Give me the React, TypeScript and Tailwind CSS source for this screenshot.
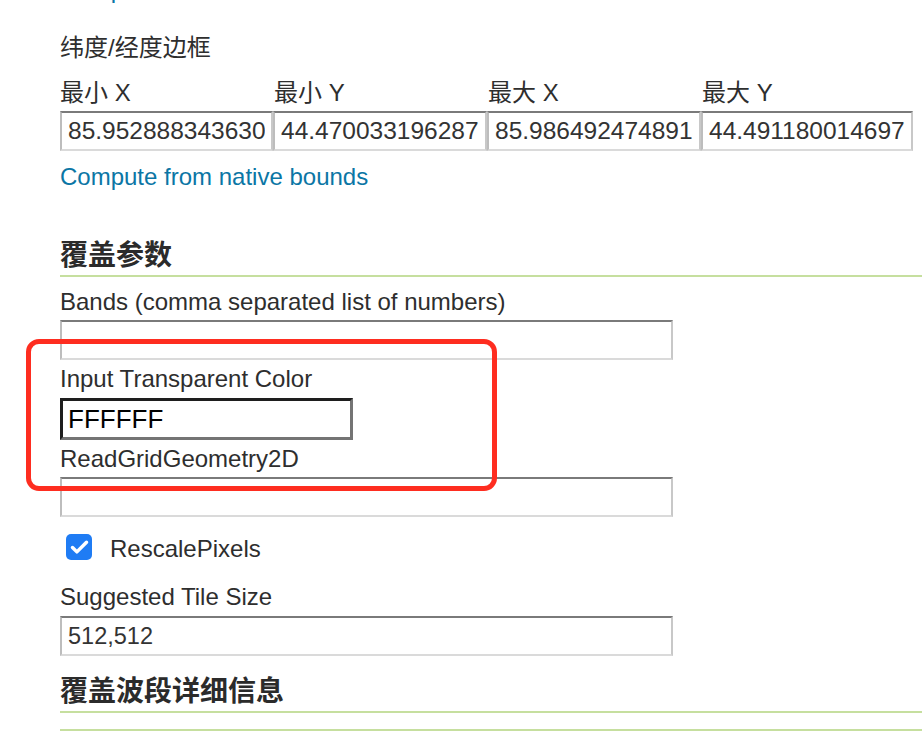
import { Check } from 'lucide-react';

const font = "font-['Liberation_Sans','Noto_Sans_CJK_SC',sans-serif]";

const TextInput = ({ value = '', className = '' }: { value?: string; className?: string }) => (
  <input
    readOnly
    value={value}
    className={`block h-[40px] border-2 border-t-[#7a7a7a] border-l-[#bdbdbd] border-r-[#c8c8c8] border-b-[#dadada] bg-white px-[6px] text-[#333] outline-none ${font} ${className}`}
  />
);

const Label = ({ children, className = '' }: { children: React.ReactNode; className?: string }) => (
  <div className={`h-[28px] text-[24px] leading-[28px] text-[#2e2e2e] whitespace-nowrap ${className}`}>{children}</div>
);

const SectionTitle = ({ children, className = '' }: { children: React.ReactNode; className?: string }) => (
  <h3 className={`h-[39px] pb-px border-b-2 border-[#c6df9f] text-[28px] leading-[36px] font-bold text-[#2b2b2b] ${className}`}>
    {children}
  </h3>
);

const bbox = [
  { label: '最小 X', value: '85.95288834363066' },
  { label: '最小 Y', value: '44.47003319628725' },
  { label: '最大 X', value: '85.98649247489135' },
  { label: '最大 Y', value: '44.49118001469795' },
];

export default function App() {
  return (
    <div className={`relative w-[922px] h-[732px] overflow-hidden bg-white pl-[60px] ${font}`}>
      {/* previous section's link, scrolled mostly out of view */}
      <div className="mt-[-24px] h-[28px] text-[24px] leading-[28px] text-[#0b76a5]">Compute from SRS bounds</div>

      <Label className="mt-[30px]">纬度/经度边框</Label>
      <div className="mt-[17px] grid grid-cols-[214px_214px_214px_211px]">
        {bbox.map((b) => (
          <Label key={b.label}>{b.label}</Label>
        ))}
      </div>
      <div className="mt-[4px] grid grid-cols-[213px_214px_214px_212px]">
        {bbox.map((b, i) => (
          <TextInput key={b.label} value={b.value} className={`text-[24.5px] ${i === 0 ? 'w-[213px]' : 'w-full'}`} />
        ))}
      </div>
      <div className="mt-[12px] h-[28px] text-[24px] leading-[28px] text-[#0b76a5]">Compute from native bounds</div>

      <SectionTitle className="mt-[47px]">覆盖参数</SectionTitle>

      <Label className="mt-[11px]">Bands (comma separated list of numbers)</Label>
      <TextInput className="mt-[4px] w-[613px] text-[24px]" />

      <Label className="mt-[5px]">Input Transparent Color</Label>
      <input
        readOnly
        value="FFFFFF"
        className={`mt-[5px] block h-[42px] w-[293px] border-[3px] border-t-[#1e1e1e] border-l-[#1e1e1e] border-r-[#747474] border-b-[#747474] bg-white px-[5px] text-[26px] text-black outline-none ${font}`}
      />

      <Label className="mt-[5px]">ReadGridGeometry2D</Label>
      <TextInput className="mt-[4px] w-[613px] text-[24px]" />

      <div className="mt-[17px] flex items-start">
        <span className="ml-[6px] flex h-[26px] w-[26px] items-center justify-center rounded-[5px] bg-[#1f7cf4]">
          <Check className="h-[21px] w-[21px] text-white" strokeWidth={4} />
        </span>
        <Label className="ml-[18px] mt-px">RescalePixels</Label>
      </div>

      <Label className="mt-[20px]">Suggested Tile Size</Label>
      <TextInput value="512,512" className="mt-[5px] w-[613px] text-[23.5px]" />

      <SectionTitle className="mt-[18px]">覆盖波段详细信息</SectionTitle>
      <div className="mt-[16px] h-[2px] bg-[#c6df9f]" />

      {/* annotation */}
      <div className="absolute left-[26px] top-[339px] h-[152px] w-[471px] rounded-[13px] border-[5px] border-[#fe2d20]" />
    </div>
  );
}
